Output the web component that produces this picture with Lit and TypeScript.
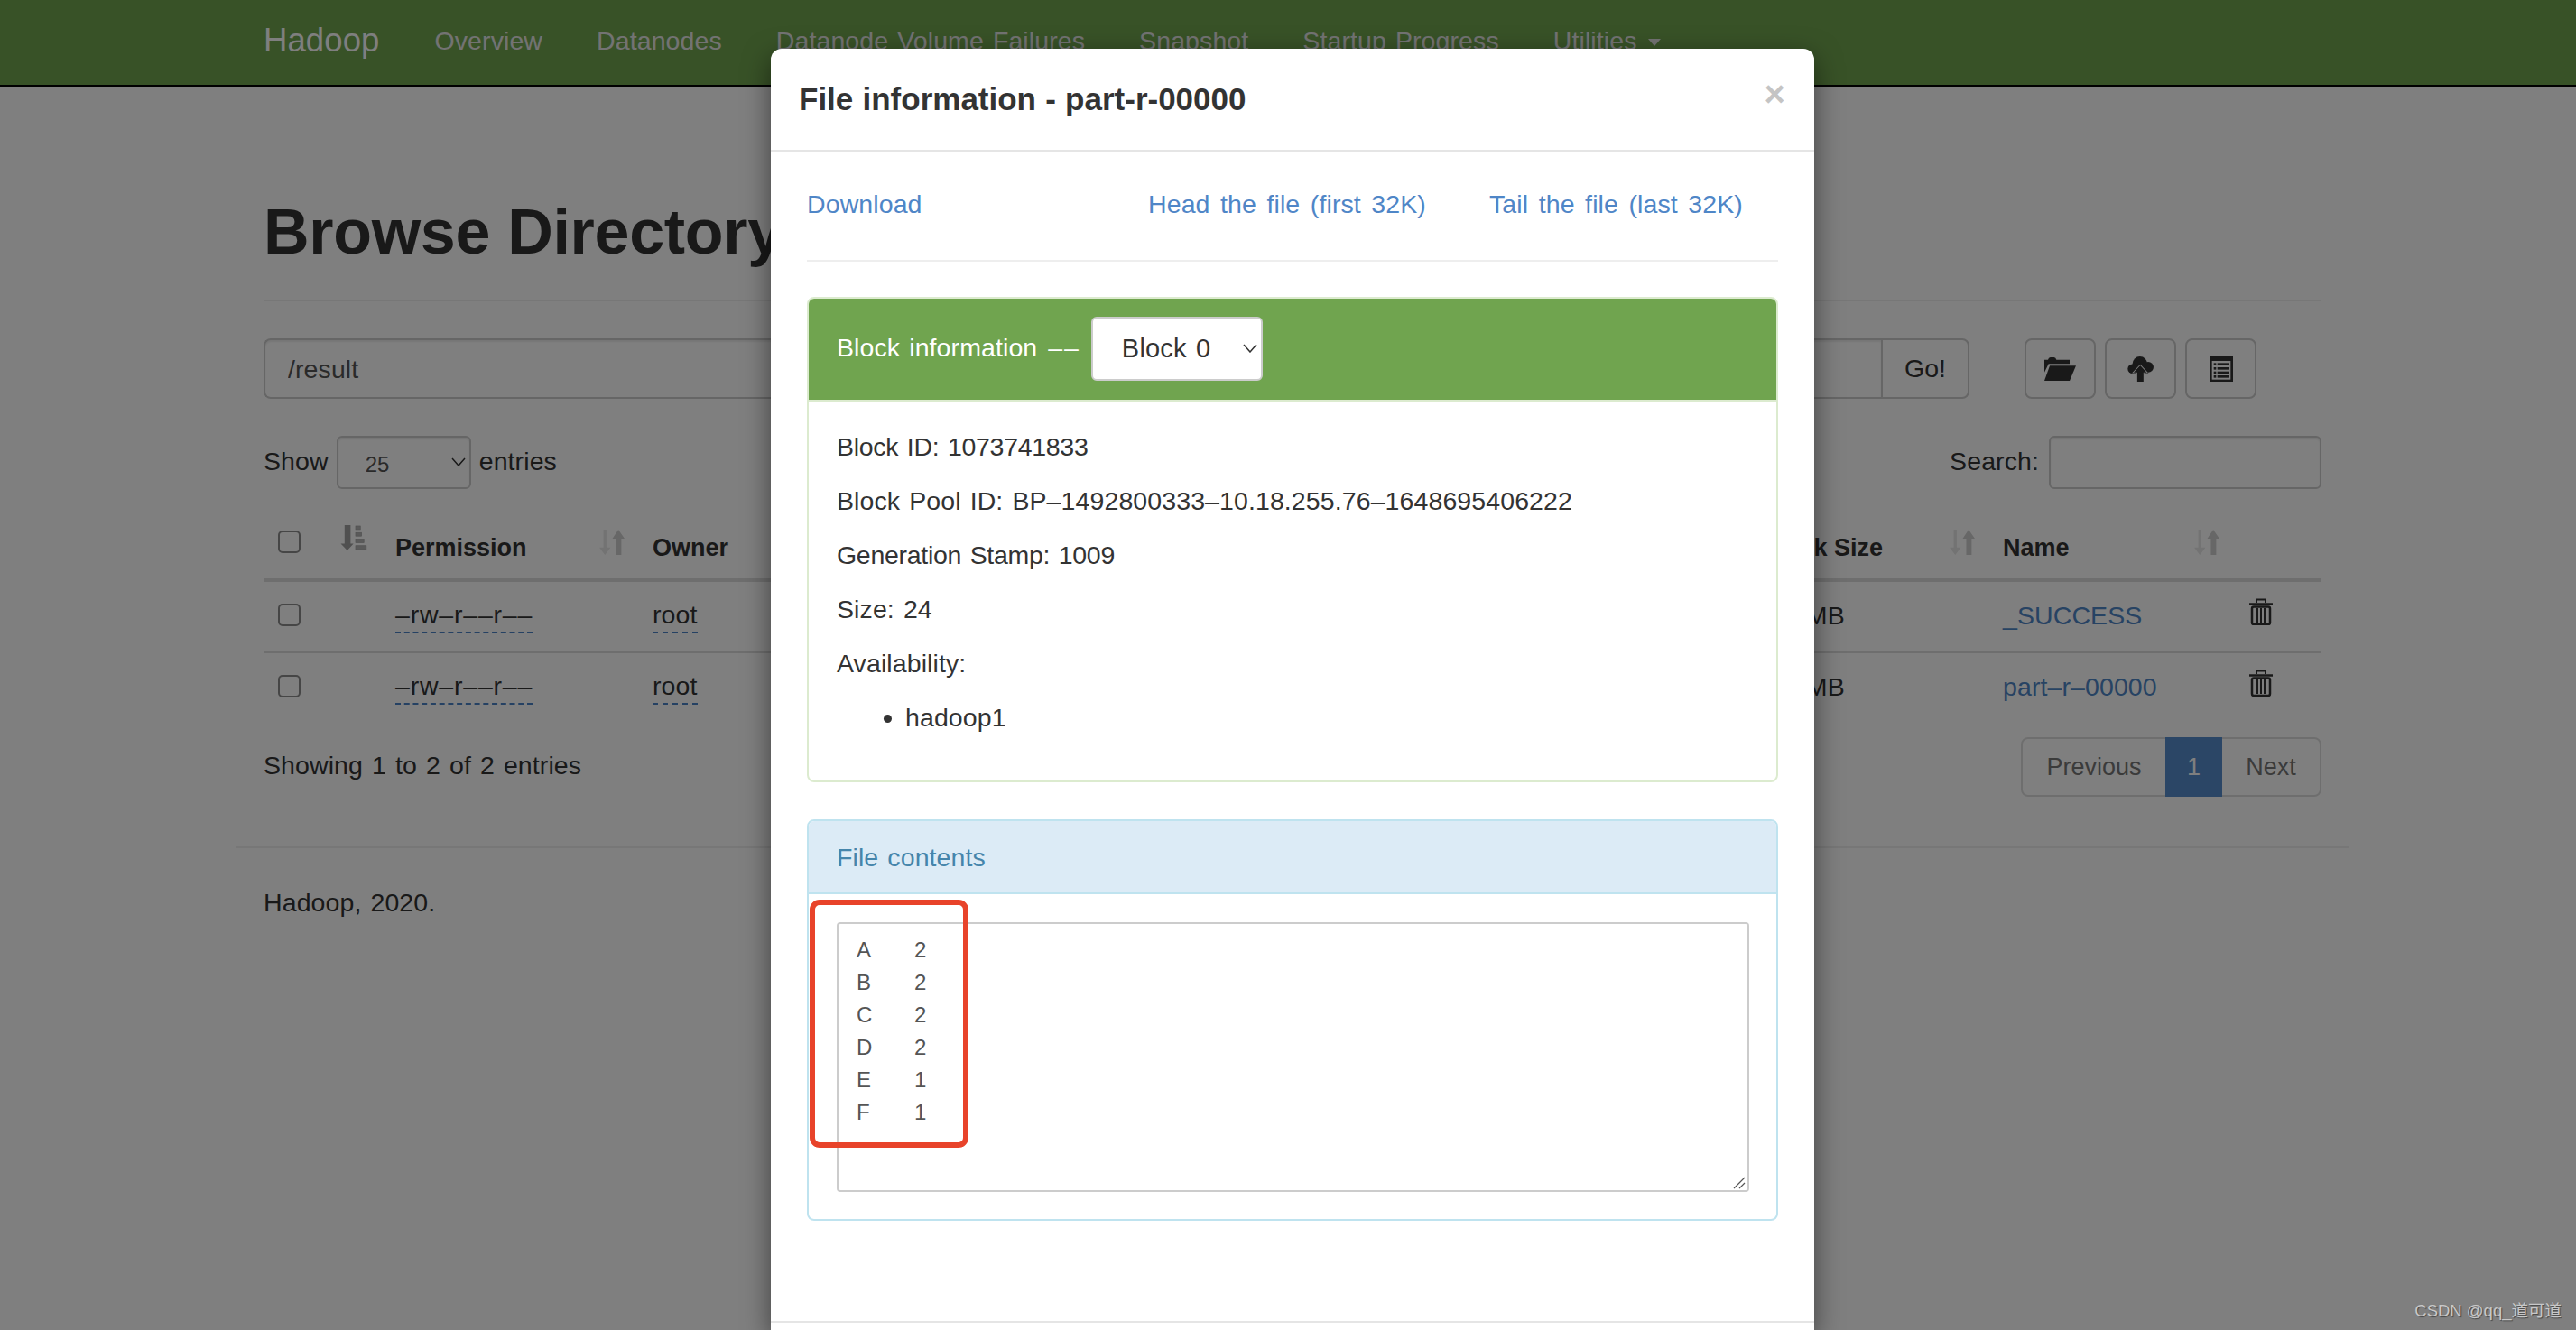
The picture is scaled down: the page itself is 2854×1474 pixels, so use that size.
import { LitElement, html, css, svg } from "lit";
import { customElement } from "lit/decorators.js";

const chevron = html`<svg class="chev" viewBox="0 0 16 10"><path d="M1 1l7 8 7-8" fill="none" stroke="#333" stroke-width="1.500"/></svg>`;

const sortBoth = html`<svg class="sort" viewBox="0 0 85 85">
  <path d="M14 0h10v60h14L19 85 0 60h14z" fill="#e6e6e6"/>
  <path d="M56 85V30H44L64 0l21 30H74v55z" fill="#cfcfcf"/>
</svg>`;

const sortAttr = html`<svg class="sort first" viewBox="0 0 88 85">
  <path d="M13 0h20v62h10L22 85 0 62h13z" fill="#a0a0a0"/>
  <g fill="#b4b4b4" stroke="#a0a0a0" stroke-width="2">
    <rect x="50" y="3" width="16" height="12"/><rect x="50" y="25" width="20" height="12"/>
    <rect x="50" y="47" width="28" height="12"/><rect x="50" y="69" width="36" height="12"/>
  </g>
</svg>`;

const trash = html`<svg class="trash" viewBox="0 0 26 30">
  <g fill="none" stroke="#333">
    <path d="M8 5V1.500h10V5" stroke-width="2"/>
    <path d="M0 6.500h26" stroke-width="2.500"/>
    <rect x="3" y="9.500" width="20" height="19.500" rx="2" stroke-width="2.500"/>
    <path d="M9 11v16M13 11v16M17 11v16" stroke-width="2"/>
  </g>
</svg>`;

const folder = svg`<path d="M0 8h12q2-8 8-8h12q6 0 8 8h44v14H14L0 50z" fill="#333"/><path d="M18 28h87L84 78H0z" fill="#333"/>`;
const cloud = svg`<g fill="#333"><circle cx="17" cy="42" r="16"/><circle cx="42" cy="25" r="25"/><circle cx="70" cy="36" r="18"/><rect x="17" y="30" width="53" height="28"/></g>
  <path d="M43 30l22 24H54v31H33V54H21z" fill="#333" stroke="#fff" stroke-width="5" paint-order="stroke"/><rect x="34" y="60" width="18" height="25" fill="#333"/>`;
const listAlt = svg`<rect width="78" height="84" fill="#333"/><rect x="8" y="15" width="62" height="62" fill="#fff"/>
  <g fill="#333"><rect x="14" y="22" width="8" height="8"/><rect x="26" y="22" width="40" height="8"/><rect x="14" y="36" width="8" height="8"/><rect x="26" y="36" width="40" height="8"/><rect x="14" y="50" width="8" height="8"/><rect x="26" y="50" width="40" height="8"/><rect x="14" y="63" width="8" height="8"/><rect x="26" y="63" width="40" height="8"/></g>`;

const NAV = ["Overview", "Datanodes", "Datanode Volume Failures", "Snapshot", "Startup Progress"];
const FILES = ["_SUCCESS", "part–r–00000"];

@customElement("app-root")
export class AppRoot extends LitElement {
  static styles = css`
    :host { display: block; position: relative; height: 100vh; overflow: hidden; background: #fff;
      font: 28.500px/38.500px "Liberation Sans", Arial, sans-serif; color: #333; letter-spacing: .1px; word-spacing: 2px; }
    * { box-sizing: border-box; }
    a { color: #4f86c7; text-decoration: none; }

    .navbar { height: 96px; background: #70a44f; border-bottom: 2px solid #000; padding: 0 0 4px 292px; display: flex; align-items: center; color: #e6e6e6; }
    .brand { font-size: 36.500px; margin-right: 31px; color: #fff; }
    .navbar .item { padding: 0 30px; white-space: nowrap; }
    .caret { display: inline-block; width: 0; height: 0; margin-left: 12px; vertical-align: middle; border-top: 8px solid; border-left: 7px solid transparent; border-right: 7px solid transparent; }

    .main { width: 2280px; margin-left: 292px; }
    .page-header { margin-top: 122px; padding-bottom: 36px; border-bottom: 2px solid #eee; }
    h1 { margin: 0; font-size: 70px; line-height: 78px; font-weight: bold; letter-spacing: -.3px; word-spacing: 0; }

    .tools { display: flex; margin-top: 41px; height: 67px; margin-right: 72px; }
    .group { flex: 1; display: flex; }
    .path { flex: 1; min-width: 0; border: 2px solid #ccc; border-right: 0; border-radius: 8px 0 0 8px; padding: 2px 25px 0; font: inherit; letter-spacing: .1px; color: #555; box-shadow: inset 0 2px 2px rgba(0,0,0,.08); background: #fff; }
    .btn { border: 2px solid #ccc; background: #fff; color: #333; font: inherit; border-radius: 8px; display: flex; align-items: center; justify-content: center; padding: 0; }
    .go { width: 98px; border-radius: 0 8px 8px 0; }
    .icons { display: flex; gap: 10px; margin-left: 61px; }
    .icons .btn { width: 79px; }
    .ic-folder { width: 35px; height: 26px; }
    .ic-cloud { width: 29px; height: 28px; }
    .ic-list { width: 26px; height: 28px; }

    .filters { display: flex; justify-content: space-between; align-items: center; height: 59px; margin-top: 41px; }
    .filters > div { display: flex; align-items: center; padding-bottom: 2px; }
    .selwrap { position: relative; display: block; margin: 0 9px 0 9px; }
    .len { appearance: none; display: block; width: 149px; height: 59px; margin-top: 2px; border: 2px solid #ccc; border-radius: 6px; background: #fff; padding: 4px 0 0 30px; font: 24px "Liberation Sans", Arial, sans-serif; color: #555; box-shadow: inset 0 2px 2px rgba(0,0,0,.08); }
    .chev { position: absolute; right: 6px; top: 50%; width: 16px; height: 10px; transform: translateY(-50%); pointer-events: none; }
    .search { width: 302px; height: 59px; margin: 2px 0 0 11px; border: 2px solid #ccc; border-radius: 6px; background: #fff; box-shadow: inset 0 2px 2px rgba(0,0,0,.08); }

    .row { display: grid; grid-template-columns: 130px 285px 1228px 268px 271px 98px; align-items: center; }
    .row > * { padding-left: 16px; min-width: 0; white-space: nowrap; }
    .cols { display: grid; grid-template-columns: 180px 1fr; align-items: center; padding: 0 !important; }
    .cols > div { padding-left: 16px; }
    .head { height: 79px; margin-top: 24px; border-bottom: 4px solid #ddd; font-size: 27px; font-weight: bold; letter-spacing: 0; word-spacing: 0; padding-top: 3px; }
    .head .cell { display: flex; justify-content: space-between; align-items: center; padding-right: 15px; }
    .head .cell > span { padding-top: 5px; }
    .head .c0 { padding-top: 0; padding-bottom: 10px; }
    .head .cell svg { margin-top: -9px; }
    .body { height: 79px; border-bottom: 2px solid #ddd; padding-bottom: 3px; }
    .body.last { border-bottom-color: transparent; }
    .tip { color: #333; border-bottom: 2px dashed #4a82c6; padding-bottom: 1px; letter-spacing: .8px; }
    .tip.own { letter-spacing: .1px; }
    .body .tip { display: inline-block; line-height: 36px; }
    .check { appearance: none; display: block; margin: 0; width: 25px; height: 25px; border: 2px solid #8c8c8c; border-radius: 5px; background: #fff; }
    .body .cbx { padding-bottom: 1px; }
    .sort { width: 28px; height: 28px; flex: none; }
    .sort.first { width: 30px; }
    .trash { width: 26px; height: 30px; display: block; margin: -8px 0 0 2px; }
    .nudge { margin-left: -8px; }

    .bottom { display: flex; justify-content: space-between; align-items: center; margin-top: 14px; }
    .bottom .info { margin-top: -4px; }
    .pager { display: flex; height: 66px; border: 2px solid #ddd; border-radius: 8px; color: #777; font-size: 27px; letter-spacing: 0; }
    .pager span { display: flex; align-items: center; justify-content: center; }
    .pager .prev { width: 158px; }
    .pager .on { width: 63px; margin: -2px 0; background: #568ccc; color: #fff; }
    .pager .next { width: 108px; }

    .footer { width: 2340px; margin: 55px 0 0 -30px; padding: 41px 0 0 30px; border-top: 2px solid #eee; }

    .backdrop { position: absolute; inset: 0; background: rgba(0,0,0,.5); }

    .modal { position: absolute; left: 854px; top: 54px; width: 1156px; height: 1420px; background: #fff; border-radius: 12px 12px 0 0; box-shadow: 0 10px 30px rgba(0,0,0,.5); overflow: hidden; }
    .m-head { height: 114px; border-bottom: 2px solid #e5e5e5; padding: 0 32px 0 31px; display: flex; justify-content: space-between; align-items: center; }
    .m-head h4 { margin: 0; font-size: 35px; font-weight: bold; letter-spacing: 0; word-spacing: .5px; }
    .close { font-size: 40px; font-weight: bold; color: #c4c4c4; line-height: 1; margin-top: -12px; }
    .m-body { padding: 0 40px 0 40px; }
    .links { display: grid; grid-template-columns: 378px 378px auto; align-items: center; height: 122px; padding-bottom: 3px; border-bottom: 2px solid #eee; word-spacing: 3.500px; }
    .panel { border: 2px solid; border-radius: 8px; overflow: hidden; }
    .success { margin-top: 39px; border-color: #dcebcf; }
    .success .p-head { background: #70a44f; color: #fff; display: flex; align-items: center; padding: 0 31px 2px; margin-top: -2px; height: 114px; }
    .dash { letter-spacing: 2px; }
    .sel2 { margin: 2px 0 0 0; position: relative; }
    .blk { appearance: none; display: block; width: 190px; height: 71px; border: 2px solid #ccc; border-radius: 6px; background: #fff; padding: 0 0 0 32px; font: 29px "Liberation Sans", Arial, sans-serif; letter-spacing: .2px; word-spacing: 2px; color: #333; }
    .p-body { padding: 31px 31px 50px; border-top: 2px solid #dcebcf; }
    .p-body p { margin: 0 0 21.500px; }
    .p-body p.num { letter-spacing: -.3px; }
    .p-body ul { margin: 0; padding-left: 76px; }
    .info-p { margin-top: 41px; border-color: #bfe3ef; }
    .info-p .p-head { height: 83px; margin-top: -2px; padding: 4px 31px 0; display: flex; align-items: center; background: #dcebf6; color: #4585ab; border-bottom: 2px solid #bfe3ef; }
    .p-text { position: relative; padding: 31px 31px 30px; }
    textarea { display: block; width: 1011px; height: 299px; border: 2px solid #ccc; border-radius: 4px; padding: 11px 20px; font: 24px/36px "Liberation Sans", Arial, sans-serif; color: #555; tab-size: 64px; background: #fff; outline: none; resize: none; }
    .grip { position: absolute; right: 34px; bottom: 33px; width: 14px; height: 14px; }
    .m-foot { margin-top: 111px; border-top: 2px solid #e5e5e5; height: 20px; }
    .mark { position: absolute; left: 43px; top: 943px; width: 176px; height: 275px; border: 6px solid #e8432a; border-radius: 11px; }
    .wm { position: absolute; right: 16px; bottom: 8px; font: 18.500px/26px "Liberation Sans", "Noto Sans CJK SC", sans-serif; letter-spacing: 0; word-spacing: 0; color: #c8c8c8; text-shadow: 1px 1px 1px rgba(0,0,0,.45); }
  `;

  render() {
    return html`
      <div class="navbar">
        <span class="brand">Hadoop</span>
        ${NAV.map((n) => html`<span class="item">${n}</span>`)}
        <span class="item">Utilities<i class="caret"></i></span>
      </div>
      <div class="main">
        <div class="page-header"><h1>Browse Directory</h1></div>
        <div class="tools">
          <div class="group"><input class="path" value="/result" /><button class="btn go">Go!</button></div>
          <div class="icons">
            <button class="btn"><svg class="ic-folder" viewBox="0 0 105 78">${folder}</svg></button>
            <button class="btn"><svg class="ic-cloud" viewBox="0 0 88 85">${cloud}</svg></button>
            <button class="btn"><svg class="ic-list" viewBox="0 0 78 84">${listAlt}</svg></button>
          </div>
        </div>
        <div class="filters">
          <div>Show<label class="selwrap"><select class="len"><option>25</option></select>${chevron}</label>entries</div>
          <div>Search:<input class="search" /></div>
        </div>
        <div class="row head">
          <div class="cell c0"><input type="checkbox" class="check" />${sortAttr}</div>
          <div class="cell"><span>Permission</span>${sortBoth}</div>
          <div class="cols"><div class="cell"><span>Owner</span></div><div></div></div>
          <div class="cell"><span>Block Size</span>${sortBoth}</div>
          <div class="cell"><span>Name</span>${sortBoth}</div>
          <div></div>
        </div>
        ${FILES.map(
          (f, i) => html`<div class="row body ${i === FILES.length - 1 ? "last" : ""}">
            <div class="cbx"><input type="checkbox" class="check" /></div>
            <div><span class="tip">–rw–r––r––</span></div>
            <div class="cols"><div><span class="tip own">root</span></div><div></div></div>
            <div><span class="nudge">128 MB</span></div>
            <div><a href="#">${f}</a></div>
            <div>${trash}</div>
          </div>`
        )}
        <div class="bottom">
          <div class="info">Showing 1 to 2 of 2 entries</div>
          <div class="pager"><span class="prev">Previous</span><span class="on">1</span><span class="next">Next</span></div>
        </div>
        <div class="footer">Hadoop, 2020.</div>
      </div>

      <div class="backdrop"></div>

      <div class="modal">
        <div class="m-head"><h4>File information - part-r-00000</h4><span class="close">×</span></div>
        <div class="m-body">
          <div class="links"><a href="#">Download</a><a href="#">Head the file (first 32K)</a><a href="#">Tail the file (last 32K)</a></div>
          <div class="panel success">
            <div class="p-head">Block information <span class="dash">&nbsp;––&nbsp;</span><label class="selwrap sel2"><select class="blk"><option>Block 0</option></select>${chevron}</label></div>
            <div class="p-body">
              <p class="num">Block ID: 1073741833</p>
              <p>Block Pool ID: BP–1492800333–10.18.255.76–1648695406222</p>
              <p class="num">Generation Stamp: 1009</p>
              <p>Size: 24</p>
              <p>Availability:</p>
              <ul><li>hadoop1</li></ul>
            </div>
          </div>
          <div class="panel info-p">
            <div class="p-head">File contents</div>
            <div class="p-text"><textarea readonly>A\t2
B\t2
C\t2
D\t2
E\t1
F\t1</textarea><svg class="grip" viewBox="0 0 14 14"><path d="M1 13L13 1M7 13l6-6" stroke="#555" stroke-width="1.200" fill="none"/></svg></div>
          </div>
        </div>
        <div class="m-foot"></div>
        <div class="mark"></div>
      </div>
      <div class="wm">CSDN @qq_道可道</div>
    `;
  }
}
